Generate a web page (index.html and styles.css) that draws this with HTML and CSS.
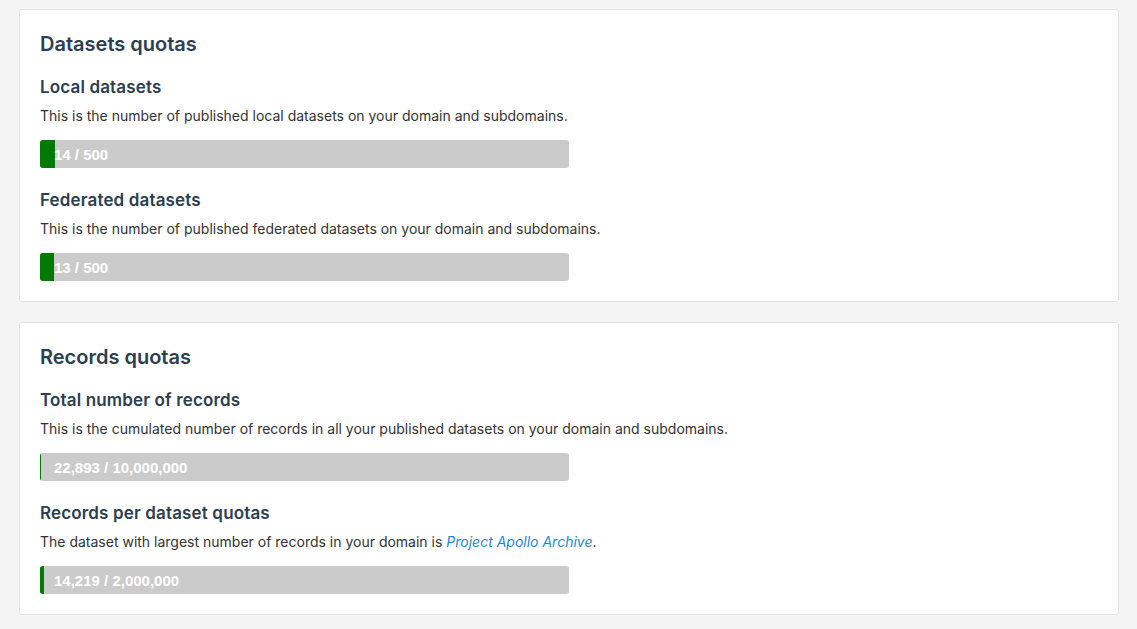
FILE: index.html
```html
<!DOCTYPE html>
<html>
<head>
<meta charset="utf-8">
<link rel="stylesheet" href="styles.css">
</head>
<body>
<main class="page">
  <section class="card">
    <h2 class="card-title">Datasets quotas</h2>
    <div class="quota">
      <h3 class="quota-title">Local datasets</h3>
      <p class="quota-desc">This is the number of published local datasets on your domain and subdomains.</p>
      <div class="bar">
        <div class="bar-fill" style="width: 2.8%"></div>
        <span class="bar-label">14 / 500</span>
      </div>
    </div>
    <div class="quota">
      <h3 class="quota-title">Federated datasets</h3>
      <p class="quota-desc">This is the number of published federated datasets on your domain and subdomains.</p>
      <div class="bar">
        <div class="bar-fill" style="width: 2.6%"></div>
        <span class="bar-label">13 / 500</span>
      </div>
    </div>
  </section>
  <section class="card">
    <h2 class="card-title">Records quotas</h2>
    <div class="quota">
      <h3 class="quota-title">Total number of records</h3>
      <p class="quota-desc">This is the cumulated number of records in all your published datasets on your domain and subdomains.</p>
      <div class="bar">
        <div class="bar-fill" style="width: 0.23%"></div>
        <span class="bar-label">22,893 / 10,000,000</span>
      </div>
    </div>
    <div class="quota">
      <h3 class="quota-title">Records per dataset quotas</h3>
      <p class="quota-desc">The dataset with largest number of records in your domain is <a class="link" href="#">Project Apollo Archive</a>.</p>
      <div class="bar">
        <div class="bar-fill" style="width: 0.71%"></div>
        <span class="bar-label">14,219 / 2,000,000</span>
      </div>
    </div>
  </section>
</main>
</body>
</html>
```

FILE: styles.css
```css
html, body {
  margin: 0;
  padding: 0;
  background: #f4f4f4;
}
body {
  font-family: Inter, "Noto Sans", sans-serif;
  color: #333;
}
.page {
  padding: 9px 18px 0 19px;
  display: flex;
  flex-direction: column;
  gap: 20px;
}
.card {
  background: #fff;
  border: 1px solid #e4e4e4;
  border-radius: 3px;
  padding: 22px 20px 20px 20px;
  display: flex;
  flex-direction: column;
}
.card-title {
  margin: 0;
  font-size: 20px;
  line-height: 24px;
  font-weight: 600;
  color: #2c3e50;
}
.quota {
  margin-top: 20px;
  display: flex;
  flex-direction: column;
}
.quota + .quota {
  margin-top: 21px;
}
.quota-title {
  margin: 0;
  font-size: 17px;
  line-height: 22px;
  font-weight: 600;
  color: #2c3e50;
  letter-spacing: 0.15px;
}
.quota-desc {
  margin: 8px 0 14px;
  font-size: 14px;
  line-height: 20px;
  color: #333;
}
.link {
  color: #1e88d3;
  font-style: italic;
  text-decoration: none;
}
.bar {
  display: grid;
  width: 50%;
  height: 28px;
  background: #cbcbcb;
  border-radius: 3px;
  overflow: hidden;
}
.bar-fill {
  grid-area: 1 / 1;
  height: 100%;
  min-width: 1px;
  background: #007a00;
}
.bar-label {
  grid-area: 1 / 1;
  align-self: center;
  padding-left: 14px;
  font-family: "Liberation Sans", Arial, sans-serif;
  font-weight: 700;
  font-size: 15px;
  color: #fff;
}
```
